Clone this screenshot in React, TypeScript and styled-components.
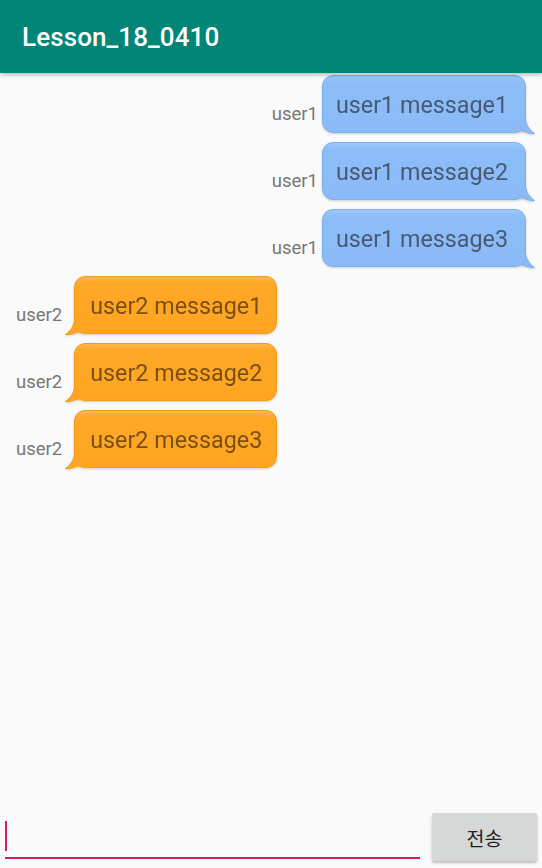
import React from "react";
import styled, { createGlobalStyle } from "styled-components";

const Global = createGlobalStyle`
  html, body { margin: 0; padding: 0; height: 100%; }
  body { background: #fafafa; font-family: Roboto, "Noto Sans", "Noto Sans CJK KR", sans-serif; }
  #root { height: 100%; }
`;

const Screen = styled.div`
  height: 868px;
  display: flex;
  flex-direction: column;
  background: #fafafa;
  overflow: hidden;
`;

const AppBar = styled.header`
  height: 73px;
  flex: none;
  background: #008577;
  display: flex;
  align-items: center;
  padding-left: 22px;
  box-shadow: 0 2px 4px rgba(0, 0, 0, 0.25);
  position: relative;
  z-index: 1;
`;

const Title = styled.h1`
  margin: 0;
  color: #fff;
  font-family: Roboto, sans-serif;
  font-weight: 500;
  font-size: 26px;
  letter-spacing: 0.1px;
`;

const List = styled.div`
  flex: 1;
  display: flex;
  flex-direction: column;
  gap: 9px;
  padding-top: 2px;
`;

const Row = styled.div<{ $mine: boolean }>`
  display: flex;
  justify-content: ${(p) => (p.$mine ? "flex-end" : "flex-start")};
  align-items: flex-end;
  padding: ${(p) => (p.$mine ? "0 16px 0 0" : "0 0 0 16px")};
`;

const Label = styled.span<{ $mine: boolean }>`
  font-size: 18.5px;
  color: #777;
  margin-bottom: 8px;
  margin-right: ${(p) => (p.$mine ? "4px" : "12px")};
`;

const BubbleWrap = styled.div`
  position: relative;
  filter: drop-shadow(0 1px 1px rgba(0, 0, 0, 0.18));
`;

const Bubble = styled.div<{ $mine: boolean }>`
  height: 58px;
  box-sizing: border-box;
  border-radius: 11px;
  display: flex;
  align-items: center;
  padding: ${(p) => (p.$mine ? "1px 17px 0 13px" : "1px 14px 0 15px")};
  font-size: 23.3px;
  color: ${(p) => (p.$mine ? "#475a72" : "#7a4f12")};
  background: ${(p) =>
    p.$mine
      ? "linear-gradient(#9ec8fb 0px, #8cbdf9 6px, #8abbf8 100%)"
      : "linear-gradient(#ffb84a 0px, #ffa726 6px, #ffa523 100%)"};
  border: 1px solid ${(p) => (p.$mine ? "#7eb0f0" : "#f29c1c")};
`;

const Tail = styled.svg<{ $mine: boolean }>`
  position: absolute;
  bottom: -1px;
  width: 14px;
  height: 20px;
  ${(p) => (p.$mine ? "right: -9px;" : "left: -9px; transform: scaleX(-1);")}
`;

const Composer = styled.div`
  flex: none;
  display: flex;
  align-items: flex-end;
  gap: 12px;
  padding: 0 5px 7px 5px;
`;

const Input = styled.div`
  flex: 1;
  height: 38px;
  border-bottom: 2px solid #d81b60;
  position: relative;
  margin-bottom: 2px;
`;

const Caret = styled.span`
  position: absolute;
  left: 0;
  top: 2px;
  width: 2px;
  height: 30px;
  background: #d81b60;
`;

const SendButton = styled.button`
  width: 105px;
  height: 48px;
  border: none;
  border-radius: 2px;
  background: #d6d7d7;
  font-family: "Noto Sans CJK KR", Roboto, sans-serif;
  font-size: 19.5px;
  color: #222;
  box-shadow: 0 2px 3px rgba(0, 0, 0, 0.25);
  padding: 0;
`;

const messages = [
  { user: "user1", text: "user1 message1" },
  { user: "user1", text: "user1 message2" },
  { user: "user1", text: "user1 message3" },
  { user: "user2", text: "user2 message1" },
  { user: "user2", text: "user2 message2" },
  { user: "user2", text: "user2 message3" },
];

export default function App() {
  return (
    <Screen>
      <Global />
      <AppBar>
        <Title>Lesson_18_0410</Title>
      </AppBar>
      <List>
        {messages.map((m, i) => {
          const mine = m.user === "user1";
          const fill = mine ? "#8abbf8" : "#ffa523";
          const stroke = mine ? "#7eb0f0" : "#f29c1c";
          return (
            <Row key={i} $mine={mine}>
              <Label $mine={mine}>{m.user}</Label>
              <BubbleWrap>
                <Bubble $mine={mine}>{m.text}</Bubble>
                <Tail $mine={mine} viewBox="0 0 14 20">
                  <path
                    d="M0 0 L4 0 C4 9 7 15 13.5 19.5 C9 19.8 5 18.5 2 17 C1 18 0 19 0 19 Z"
                    fill={fill}
                  />
                  <path
                    d="M4 0 C4 9 7 15 13.5 19.5 C9 19.8 5 18.5 2 17"
                    fill="none"
                    stroke={stroke}
                    strokeWidth="1"
                  />
                </Tail>
              </BubbleWrap>
            </Row>
          );
        })}
      </List>
      <Composer>
        <Input>
          <Caret />
        </Input>
        <SendButton>전송</SendButton>
      </Composer>
    </Screen>
  );
}
